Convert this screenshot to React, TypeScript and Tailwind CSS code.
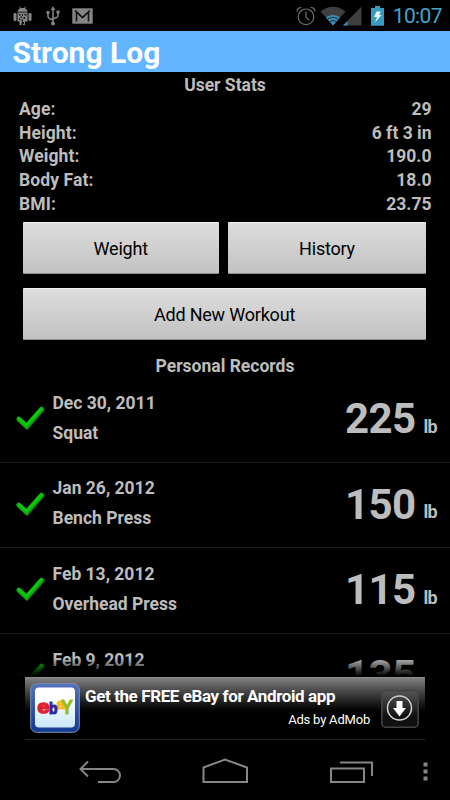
import React from "react";

const stats = [
  ["Age:", "29"],
  ["Height:", "6 ft 3 in"],
  ["Weight:", "190.0"],
  ["Body Fat:", "18.0"],
  ["BMI:", "23.75"],
];

const records = [
  { date: "Dec 30, 2011", name: "Squat", value: "225", height: "h-[86px]" },
  { date: "Jan 26, 2012", name: "Bench Press", value: "150", height: "h-[85px]" },
  { date: "Feb 13, 2012", name: "Overhead Press", value: "115", height: "h-[86px]" },
  { date: "Feb 9, 2012", name: "", value: "135", height: "h-[86px]" },
];

function StatusBar() {
  return (
    <header className="flex h-[31px] shrink-0 items-center text-[#858585]">
      <svg className="ml-[13px] h-5 w-[19px]" viewBox="0 0 19 20" fill="currentColor">
        <path d="M4.5 5.8C4.8 3.9 5.8 2.7 7 2.2L6 .4h.8L7.8 1.9h3.4L12.2.4h.8L12 2.2c1.2.5 2.2 1.7 2.5 3.6z" />
        <path d="M4.5 6.6h10v8.9H12V19H9.900v-3.500H8.700V19H6.500v-3.500h-2z" />
        <rect x="0.5" y="7" width="3" height="8" rx="1.3" />
        <rect x="15.5" y="7" width="3" height="8" rx="1.3" />
        <path d="M6 8h1.500v1.500H6zM9 8h1v2H9zM11.500 8h2v1.500h-2zM7.500 10.500h1.500V12H7.500zM10.500 11h1.500v2h-1.500zM6 12.500h1.200V14H6zM8.500 13.500h1.500v1.500H8.500zM9 16h2v2H9z" fill="#111" />
      </svg>
      <svg className="ml-[14px] h-5 w-[14px]" viewBox="0 0 14 20" fill="none" stroke="currentColor" strokeWidth="1.5">
        <path d="M7 3v14M2 7v3.500c0 1 .5 1.500 1.500 2L7 14M12 6v3.500c0 1-.5 1.500-1.500 2L7 13" />
        <path d="M7 0 4.700 4h4.600zM10.500 4.500h3v3h-3z" fill="currentColor" stroke="none" />
        <circle cx="2" cy="6.5" r="1.7" fill="currentColor" stroke="none" />
        <circle cx="7" cy="17.5" r="2" fill="currentColor" stroke="none" />
      </svg>
      <svg className="ml-[12px] h-4 w-[21px]" viewBox="0 0 21 16">
        <rect x=".3" y=".3" width="20.4" height="15.4" fill="#858585" />
        <path d="M4.500 13.500V4L10.500 9.500 16.500 4v9.500" fill="none" stroke="#151515" strokeWidth="1.6" />
        <path d="M3 2.500l7.500 7L18 2.500" fill="none" stroke="#151515" strokeWidth="1.5" />
      </svg>
      <div className="flex-1" />
      <svg className="h-5 w-5" viewBox="0 0 20 20" fill="none" stroke="#707070" strokeWidth="1.2">
        <circle cx="10" cy="10.8" r="7.8" />
        <path d="M10 5.500V11l3.300 3.300M1 5.500C1 3 3 1.500 5.500 1.500M19 5.500C19 3 17 1.500 14.500 1.500" />
      </svg>
      <svg className="ml-[4px] h-5 w-[26px]" viewBox="0 0 26 20">
        <path d="M.5 5.500C7.500-1 18.500-1 25.500 5.500L13 19.500z" fill="#3f3f3f" />
        <path d="M6 11.500C10 8 16 8 20 11.500L13 19.500z" fill="#388fb5" />
        <path d="M7.500 13.500c3-2.800 8-2.800 11 0M9.500 16c2-1.800 5-1.800 7 0" fill="none" stroke="#142a33" strokeWidth="1" />
      </svg>
      <svg className="-ml-[3px] h-5 w-[19px]" viewBox="0 0 19 20">
        <path d="M0 19.500 18.500.5v19z" fill="#3f3f3f" />
        <path d="M0 19.500 4.500 15v4.500z" fill="#388fb5" />
      </svg>
      <svg className="ml-[9px] h-5 w-[13px]" viewBox="0 0 13 20">
        <path d="M4 0h5v2h4v17.700H0V2h4z" fill="#3a9bc1" />
        <path d="M5.500 5.500h4L8.200 9H10.500L4 16.500 6 11H3z" fill="#e7f8ff" />
      </svg>
      <span className="mr-[8px] ml-[7px] w-[51px] whitespace-nowrap pt-px text-right text-[21px] leading-[30px] tracking-[-0.6px] text-[#45a4cc]">10:07</span>
    </header>
  );
}

function Check() {
  return (
    <svg className="-mt-[2px] h-[26px] w-[30px]" viewBox="0 0 30 26" fill="none">
      <path d="M4.500 15.500 12.300 22.500 27.500 5" stroke="#294d29" strokeWidth="4" strokeLinecap="round" />
      <path d="M3.800 14 11.500 21 26.500 4" stroke="#08b008" strokeWidth="4.8" strokeLinecap="round" />
      <path d="M3.800 13.200 11.500 20.200 26 4" stroke="#10cc10" strokeWidth="2" strokeLinecap="round" />
    </svg>
  );
}

const buttonClass =
  "flex h-[52px] items-center justify-center rounded-[1px] border-t border-b border-t-[#f2f2f2] border-b-[#8f8f8f] bg-linear-to-b from-[#dddddd] to-[#c2c2c2] pt-px text-[18px] tracking-[-0.2px] text-black";

function Ad() {
  return (
    <aside className="absolute top-[677px] left-[25px] flex h-[63px] w-[400px] border-t border-b border-t-[#8b8b8b] border-b-[#242424] bg-linear-to-b from-[#818181] to-black to-65%">
      <svg className="mt-[5px] ml-[5px] h-[50px] w-[50px] shrink-0" viewBox="0 0 50 50">
        <defs>
          <linearGradient id="frame" x1="0" y1="0" x2="0" y2="1"><stop stopColor="#5271bb" /><stop offset="1" stopColor="#123a91" /></linearGradient>
          <linearGradient id="paper" x1="0" y1="0" x2="0" y2="1"><stop offset=".3" stopColor="#fff" /><stop offset="1" stopColor="#c9e6fb" /></linearGradient>
        </defs>
        <rect x=".7" y=".7" width="48.6" height="48.6" rx="6" fill="url(#frame)" stroke="#8190b3" strokeWidth="1" />
        <rect x="5" y="4.5" width="40" height="40" rx="4" fill="url(#paper)" />
        <g fontFamily="Liberation Sans, sans-serif" fontWeight="700" strokeLinejoin="round">
          <text x="26.5" y="26" fontSize="15" fill="#f6b91c" stroke="#f6b91c" strokeWidth="1" textLength="8.5" lengthAdjust="spacingAndGlyphs">a</text>
          <text x="7.5" y="30" fontSize="18" fill="#e3202d" stroke="#e3202d" strokeWidth="1.6" textLength="12" lengthAdjust="spacingAndGlyphs">e</text>
          <text x="19" y="30.5" fontSize="17" fill="#2d269c" stroke="#2d269c" strokeWidth="1.2" textLength="8.5" lengthAdjust="spacingAndGlyphs">b</text>
          <text x="31" y="30.5" fontSize="20" fill="#94bd1a" stroke="#94bd1a" strokeWidth=".8" textLength="12" lengthAdjust="spacingAndGlyphs">Y</text>
        </g>
      </svg>
      <div className="ml-[5px] flex w-[285px] flex-col text-white">
        <span className="mt-[7px] whitespace-nowrap text-[17px] leading-[23px] font-bold tracking-[-0.4px]">Get the FREE eBay for Android app</span>
        <span className="mt-px self-end whitespace-nowrap text-[13px] leading-[21px] tracking-[-0.2px]">Ads by AdMob</span>
      </div>
      <svg className="mt-[12px] ml-[11px] h-[38px] w-[38px]" viewBox="0 0 38 38">
        <defs><linearGradient id="key" x1="0" y1="0" x2="0" y2="1"><stop stopColor="#555" /><stop offset=".7" stopColor="#101010" /></linearGradient></defs>
        <rect x=".8" y=".8" width="36.4" height="36.4" rx="4" fill="url(#key)" stroke="#454545" strokeWidth="1.5" />
        <circle cx="18.5" cy="18" r="12" fill="none" stroke="#d0d0d0" strokeWidth="1.5" />
        <path d="M15.500 11h6v7h3.500l-6.500 8.500-6.500-8.500h3.500z" fill="#fff" />
      </svg>
    </aside>
  );
}

export default function App() {
  return (
    <div className="relative flex h-[800px] w-[450px] flex-col overflow-hidden bg-black font-['Roboto',sans-serif] text-[#bdbdbd]">
      <StatusBar />
      <h1 className="h-[41px] shrink-0 bg-[#62b5ff] pl-[12.5px] text-[30px] leading-[44px] font-bold text-white">Strong Log</h1>
      <h2 className="h-[25px] shrink-0 text-center text-[17.5px] leading-[26px] font-bold">User Stats</h2>
      <dl className="shrink-0 pr-[18.5px] pl-[19px] text-[17.5px] font-bold">
        {stats.map(([label, value]) => (
          <div key={label} className="flex h-[23.75px] items-center justify-between">
            <dt className="tracking-[0.1px]">{label}</dt>
            <dd>{value}</dd>
          </div>
        ))}
      </dl>
      <div className="mt-[6px] flex shrink-0 gap-[9.5px] pl-[23px]">
        <button className={`${buttonClass} w-[195.5px]`}>Weight</button>
        <button className={`${buttonClass} w-[198px]`}>History</button>
      </div>
      <button className={`${buttonClass} mt-[14px] ml-[23px] w-[403px] shrink-0`}>Add New Workout</button>
      <h2 className="mt-[14px] h-[23px] shrink-0 text-center text-[17.5px] leading-[24px] font-bold">Personal Records</h2>
      <main className="relative h-[299px] shrink-0 overflow-hidden">
        {records.map((r) => (
          <section key={r.date} className={`${r.height} flex items-center border-b border-[#1d1d1d] pr-[13px] pl-[15px] font-bold`}>
            <Check />
            <div className="ml-[7.5px] h-[63px] flex-1 text-[17.5px] leading-[30px]">
              <p>{r.date}</p>
              <p>{r.name}</p>
            </div>
            <p className="text-[42px] leading-[50px] tracking-[-0.6px]">{r.value}</p>
            <p className="ml-[8px] self-end pb-[22px] text-[18px] leading-[26px] tracking-[-0.7px]">lb</p>
          </section>
        ))}
        <div className="absolute bottom-0 h-[18px] w-full bg-linear-to-b from-transparent to-black" />
      </main>
      <Ad />
      <nav className="mt-auto flex h-[60px] shrink-0 items-center">
        <svg className="h-[60px] w-[450px]" viewBox="0 740 450 60" fill="none" stroke="#868686" strokeWidth="2">
          <path d="M98 782h15.500a6 6 0 0 0 0-13H80.500M88 761.500l-7.500 7.500 7.500 7.500" />
          <path d="M203.500 782v-14.500L225 759.500l22 8V782z" />
          <path d="M331 768.500h33V782h-33zM340 762.500h32V776" />
          <path d="M423.500 762.500h4v4h-4zM423.500 769.500h4v4h-4zM423.500 776.500h4v4h-4z" fill="#868686" stroke="none" />
        </svg>
      </nav>
    </div>
  );
}
